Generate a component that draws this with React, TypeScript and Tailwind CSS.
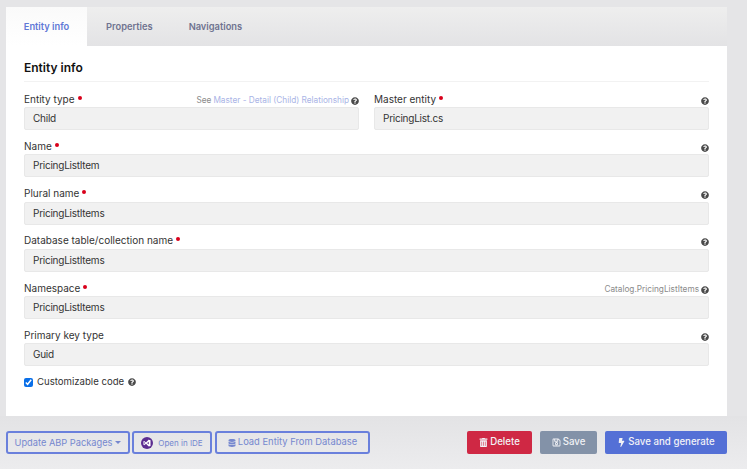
import React from "react";
import { FaBolt, FaDatabase, FaQuestionCircle, FaRegSave, FaTrashAlt } from "react-icons/fa";
import { DiVisualstudio } from "react-icons/di";

const Help = () => <FaQuestionCircle className="shrink-0 text-[#4a4a4a]" size={8} />;

const Req = () => <span className="ml-[3px] inline-block h-[4px] w-[4px] rounded-full bg-[#d9001b] align-[3px]"></span>;

const Field = ({ label, value, required, hint, link }: any) => (
    <div className="flex-1 min-w-0">
        <div className="flex h-[16px] items-center justify-between">
            <label className="text-[10px] text-[#333]">{label}{required && <Req />}</label>
            <div className="flex items-center gap-[2px] pt-[3px] text-[8.25px] text-[#8b8b8b]">
                {hint && <span>{hint}</span>}
                {link && <span className="text-[#a9b4e6]">{link}</span>}
                <Help />
            </div>
        </div>
        <div className="flex h-[23px] items-center rounded-[2px] border border-[#e8e8e8] bg-[#f1f1f1] px-[8px] text-[10px] tracking-[-0.25px] text-[#333]">{value}</div>
    </div>
);

const OutlineBtn = ({ children, className }: any) => (
    <button className={`flex h-[23px] items-center justify-center gap-[2px] rounded-[3px] border-2 border-[#6a80dc] text-[#7587cf] ${className}`}>{children}</button>
);

export default function App() {
    return (
        <div className="h-[473px] w-[747px] bg-white font-['Inter',sans-serif] overflow-hidden">
            <div className="bg-[#e5e5e7] pl-[6px] pr-[20px] pt-[7px]">
                <div className="flex h-[39px] bg-gradient-to-b from-[#eeeeee] to-[#e3e3e5] text-[9.3px] font-semibold text-[#6f7390]">
                    <div className="flex w-[81px] items-center justify-center bg-gradient-to-b from-[#fafafa] to-white pt-[1px] text-[#5f78d6]">Entity info</div>
                    <div className="ml-[19px] flex items-center pt-[1px]">Properties</div>
                    <div className="ml-[36px] flex items-center pt-[1px]">Navigations</div>
                </div>
                <div className="h-[370px] bg-white px-[18px] pt-[14px]">
                    <div className="border-b border-[#f2f2f2] pb-[5px] text-[12px] leading-[16px] font-semibold text-[#111]">Entity info</div>
                    <div className="mt-[9px] flex flex-col gap-[8.25px]">
                        <div className="flex gap-[15px]">
                            <Field label="Entity type" required value="Child" hint="See" link="Master - Detail (Child) Relationship" />
                            <Field label="Master entity" required value="PricingList.cs" />
                        </div>
                        <Field label="Name" required value="PricingListItem" />
                        <Field label="Plural name" required value="PricingListItems" />
                        <Field label="Database table/collection name" required value="PricingListItems" />
                        <Field label="Namespace" required value="PricingListItems" hint="Catalog.PricingListItems" />
                        <Field label="Primary key type" value="Guid" />
                    </div>
                    <label className="mt-[9px] flex items-center gap-[4px] text-[9.6px] text-[#333]">
                        <input type="checkbox" defaultChecked readOnly className="m-0 h-[9px] w-[9px] accent-[#0a6fe8]" />
                        Customizable code <Help />
                    </label>
                </div>
            </div>
            <div className="flex h-[53px] items-start justify-between bg-gradient-to-b from-[#e3e3e5] to-[#ececee] pl-[6px] pr-[20px] pt-[15px]">
                <div className="flex items-center gap-[2px]">
                    <OutlineBtn className="w-[124px] text-[9.25px]">Update ABP Packages <span className="ml-[1px] h-0 w-0 border-x-[3px] border-t-[3px] border-x-transparent border-t-[#7587cf]"></span></OutlineBtn>
                    <OutlineBtn className="w-[80px] text-[8px]">
                        <span className="mr-[3px] flex h-[12px] w-[12px] items-center justify-center rounded-full bg-[#5c2d91] text-white">
                            <DiVisualstudio size={10} />
                        </span>
                        Open in IDE
                    </OutlineBtn>
                    <OutlineBtn className="ml-[1px] w-[155px] text-[9.4px]"><FaDatabase size={8} />Load Entity From Database</OutlineBtn>
                </div>
                <div className="flex items-center text-[9.7px] font-medium text-[#f2f2f6]">
                    <button className="flex h-[23px] w-[65px] items-center justify-center gap-[2px] rounded-[2px] bg-[#cf2844]"><FaTrashAlt size={9} />Delete</button>
                    <button className="ml-[8px] flex h-[23px] w-[57px] items-center justify-center gap-[2px] rounded-[2px] bg-[#8392a8]"><FaRegSave size={9} />Save</button>
                    <button className="ml-[8px] flex h-[23px] w-[122px] items-center justify-center gap-[2px] rounded-[2px] bg-[#5470d6]"><FaBolt size={9} />Save and generate</button>
                </div>
            </div>
        </div>
    );
}
